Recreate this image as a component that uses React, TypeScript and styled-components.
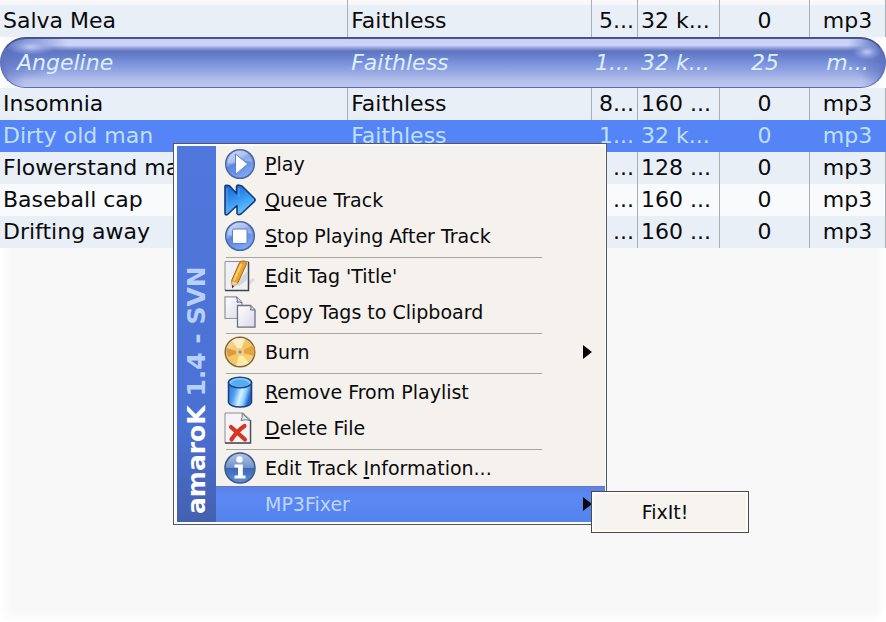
import React from "react";
import styled, { createGlobalStyle, css } from "styled-components";

const GlobalStyle = createGlobalStyle`
  * { box-sizing: border-box; }
  body { margin: 0; background: #f8f8f9; }
`;

const Window = styled.main`
  position: relative;
  min-height: 100vh;
  overflow: hidden;
  background: #f8f8f9;
  box-shadow: inset 0 0 8px 5px #ffffff;
  font-family: "DejaVu Sans", Verdana, sans-serif;
  color: #0a0a0c;
`;

/* ---------- playlist ---------- */

const Playlist = styled.table`
  width: 100%;
  table-layout: fixed;
  border-collapse: separate;
  border-spacing: 0;
  font-size: 22px;
  line-height: 32px;
`;

const Col = styled.col<{ $width?: string }>`
  width: ${(p) => p.$width ?? "auto"};
`;

type Align = "left" | "center" | "right";

const Cell = styled.td<{ $align?: Align }>`
  height: 32px;
  padding: 0 3px;
  overflow: hidden;
  white-space: nowrap;
  text-align: ${(p) => p.$align ?? "left"};
  border-right: 1px solid #a9adb4;
`;

type Tone = "tinted" | "plain" | "edge" | "playing" | "selected";

const glass = `linear-gradient(
  #c9d2f4 0, #ccd5f8 13%, #98a8de 18%, #5f74bc 25%, #667dcb 34%,
  #7d94de 52%, #98a9e4 70%, #b3bfea 86%, #bcc6ee 100%
)`;

const TrackRow = styled.tr<{ $tone: Tone }>`
  background: #e9eff7;

  ${(p) => p.$tone === "plain" && css`background: #f8fafc;`}

  ${(p) =>
    p.$tone === "edge" &&
    css`
      background: #f8f8fa;
      ${Cell} { height: 5px; padding: 0; line-height: 4px; }
    `}

  ${(p) =>
    p.$tone === "selected" &&
    css`
      background: #5484f6;
      color: #bfe0ff;
      ${Cell} { border-color: transparent; }
    `}

  ${(p) =>
    p.$tone === "playing" &&
    css`
      background: #eef2fa;
      color: #dcf0ff;
      font-style: italic;
      ${Cell} {
        height: 51px;
        border: 0 solid #5d6cae;
        border-top: 2px solid #46538f;
        border-bottom-width: 1px;
        background: ${glass};
      }
      ${Cell}:nth-child(3) {
        padding-right: 8px;
      }
      ${Cell}:first-child {
        padding-left: 16px;
        border-left-width: 1px;
        border-radius: 26px 0 0 26px;
        background:
          radial-gradient(ellipse 24px 8px at 30px 8px, #bccaf4 0, #a9b9ee80 50%, transparent 100%),
          radial-gradient(ellipse 64px 34px at 4px 10px, #5a6fbe 0, #6479c6b0 45%, transparent 100%),
          linear-gradient(90deg, #5f74c2 0, #7488ce80 8px, transparent 24px),
          ${glass};
      }
      ${Cell}:last-child {
        border-right-width: 1px;
        border-radius: 0 26px 26px 0;
        background:
          radial-gradient(ellipse 14px 8px at calc(100% - 18px) 13px, #bccaf4 0, #a9b9ee80 50%, transparent 100%),
          radial-gradient(ellipse 36px 34px at calc(100% - 2px) 12px, #5a6fbe 0, #6479c6b0 45%, transparent 100%),
          linear-gradient(270deg, #5f74c2 0, #7488ce80 8px, transparent 24px),
          ${glass};
      }
    `}
`;

interface Track {
  tone: Tone;
  cells: string[];
}

const tracks: Track[] = [
  { tone: "edge", cells: ["", "", "", "", "", ""] },
  { tone: "tinted", cells: ["Salva Mea", "Faithless", "5...", "32 k...", "0", "mp3"] },
  { tone: "playing", cells: ["Angeline", "Faithless", "1...", "32 k...", "25", "m..."] },
  { tone: "tinted", cells: ["Insomnia", "Faithless", "8...", "160 ...", "0", "mp3"] },
  { tone: "selected", cells: ["Dirty old man", "Faithless", "1...", "32 k...", "0", "mp3"] },
  { tone: "tinted", cells: ["Flowerstand man", "", "...", "128 ...", "0", "mp3"] },
  { tone: "plain", cells: ["Baseball cap", "", "...", "160 ...", "0", "mp3"] },
  { tone: "tinted", cells: ["Drifting away", "", "...", "160 ...", "0", "mp3"] },
];

const alignments: Align[] = ["left", "left", "right", "left", "center", "center"];

/* ---------- context menu ---------- */

const ContextMenu = styled.div`
  position: absolute;
  left: 173px;
  top: 143px;
  width: 434px;
  display: flex;
  padding: 2px 1px 2px 3px;
  border: 1px solid #55585f;
  background: #fdfcfb;
  font-size: 19px;
`;

const Banner = styled.div`
  flex: none;
  width: 39px;
  display: flex;
  align-items: center;
  padding-top: 8px;
  writing-mode: vertical-rl;
  transform: rotate(180deg);
  background: linear-gradient(#4460b0, #4a70d2 25%, #5078dc);
  color: #b7d0ff;
  font-size: 25px;
  line-height: 39px;
  font-weight: bold;
  white-space: nowrap;
`;

const BannerName = styled.span`
  color: #ffffff;
`;

const MenuList = styled.ul`
  flex: 1;
  min-width: 0;
  margin: 0;
  padding: 0;
  list-style: none;
  background: #f5f1ec;
`;

const MenuEntry = styled.li`
  position: relative;
`;

const MenuButton = styled.button<{ $active?: boolean }>`
  width: 100%;
  height: 36px;
  display: flex;
  align-items: center;
  gap: 9px;
  padding: 0 13px 0 8px;
  border: 0;
  background: transparent;
  color: inherit;
  font: inherit;
  text-align: left;
  white-space: nowrap;

  ${(p) =>
    p.$active &&
    css`
      background: linear-gradient(#6378b4 1px, #5a82e6 1px, #5b88f4 30%, #5583ec);
      color: #bfd6fb;
    `}
`;

const IconSlot = styled.span`
  flex: none;
  width: 32px;
  height: 32px;

  svg { display: block; }
`;

const Label = styled.span`
  flex: 1;
`;

const Mnemonic = styled.span`
  text-decoration: underline;
  text-decoration-thickness: 2px;
  text-underline-offset: 2px;
`;

const Divider = styled.li`
  height: 4px;
  margin: 0 63px 0 10px;
  background: linear-gradient(#a8a59f, #a8a59f) 0 3px / 100% 1px no-repeat;
`;

const Submenu = styled.div`
  position: absolute;
  left: calc(100% - 14px);
  top: 5px;
  width: 158px;
  padding: 2px;
  border: 1px solid #4b4b4e;
  background: #fdfcfb;
`;

const SubmenuButton = styled.button`
  width: 100%;
  height: 36px;
  padding: 0 10px 0 0;
  border: 0;
  background: #f7f3ee;
  color: inherit;
  font: inherit;
  text-align: center;
`;

/* ---------- icons ---------- */

const Svg = ({ children }: { children: React.ReactNode }) => (
  <svg width="32" height="32" viewBox="0 0 32 32" aria-hidden="true">
    {children}
  </svg>
);

const Orb = ({ id, children }: { id: string; children: React.ReactNode }) => (
  <Svg>
    <defs>
      <linearGradient id={id} x1="0" y1="0" x2="0.6" y2="1">
        <stop offset="0" stopColor="#c3d2f4" />
        <stop offset="0.42" stopColor="#88a7e8" />
        <stop offset="0.5" stopColor="#5a86dc" />
        <stop offset="1" stopColor="#7fa9f4" />
      </linearGradient>
    </defs>
    <circle cx="16" cy="16" r="14.3" fill={`url(#${id})`} stroke="#4c66a8" strokeWidth="1.5" />
    <path d="M4 15a12 12 0 0 1 24-1c-7-3-15 3-24 1z" fill="#fff" opacity=".3" />
    {children}
  </Svg>
);

const PlayIcon = () => (
  <Orb id="orb-play">
    <path d="M11.500 6v20.500L23.800 16z" fill="#fff" stroke="#5b80cf" strokeWidth="1" />
  </Orb>
);

const StopIcon = () => (
  <Orb id="orb-stop">
    <rect x="8.500" y="9" width="14.500" height="14.500" rx="1.500" fill="#fff" stroke="#5b80cf" strokeWidth="1" />
  </Orb>
);

const QueueIcon = () => (
  <Svg>
    <defs>
      <linearGradient id="queue" x1="0" y1="0" x2="0.4" y2="1">
        <stop offset="0" stopColor="#1c62c6" />
        <stop offset="0.45" stopColor="#2f8cec" />
        <stop offset="1" stopColor="#62c4ff" />
      </linearGradient>
    </defs>
    <path
      d="M1 2.500Q1 .8 3 1.400L5.500 1.800L12.500 9.500V2.500Q13 .8 15 1.200L18 2L30.500 14.500Q31.800 16 30.500 17.300L17 30Q14 31.500 13 29.500V21.500L3.500 30.500Q1.200 31.600 1 29.500Z"
      fill="url(#queue)"
      stroke="#173a7c"
      strokeWidth="1.600"
      strokeLinejoin="round"
    />
    <path d="M3 4v23M15 4v9" stroke="#5aa6f4" strokeWidth="1" fill="none" />
  </Svg>
);

const EditIcon = () => (
  <Svg>
    <path d="M19 24l10-6 2 2-8 7z" fill="#dedbdd" />
    <path d="M1 1.500h23.500v29H1z" fill="#eef0f5" stroke="#8d92a0" strokeWidth="1" />
    <path d="M24.500 2v28.500H1" fill="none" stroke="#3f4552" strokeWidth="1.500" />
    <path d="M11 25l12-14v9l-8 6z" fill="#d5d6de" />
    <path d="M15.500 2.500Q17 .6 20 1q3 .6 2.300 3.500L14 22.500l-5.500 5-.8-7z" fill="#f2a02c" stroke="#a8641c" strokeWidth="1" />
    <path d="M17.500 4L10 20.500" stroke="#ffd272" strokeWidth="2" />
    <path d="M8 21.500l5.500 1.500L8.500 27.500z" fill="#efd3a4" />
    <path d="M8 25l2 1L8.300 28.500z" fill="#2c2620" />
  </Svg>
);

const CopyIcon = () => (
  <Svg>
    <defs>
      <linearGradient id="sheet" x1="0" y1="0" x2="1" y2="1">
        <stop offset="0" stopColor="#ffffff" />
        <stop offset="1" stopColor="#d8d8ea" />
      </linearGradient>
    </defs>
    <path d="M1 .8h11.500l5.500 5.500V22.500H1z" fill="url(#sheet)" stroke="#8f92a2" strokeWidth="1.200" />
    <path d="M12.500 .8q1.500 3 .5 5.500 3-.8 5 .5" fill="#d8dae8" stroke="#60657a" />
    <path d="M13.500 9.500H26.500l4.500 4.500v17.200H13.500z" fill="url(#sheet)" stroke="#6c7084" strokeWidth="1.300" />
    <path d="M26.500 9.500q1 2.500 0 4.500h4.500" fill="#d2d4e4" stroke="#6c7084" />
  </Svg>
);

const BurnIcon = () => (
  <Svg>
    <defs>
      <linearGradient id="disc" x1="0" y1="0" x2="1" y2="1">
        <stop offset="0" stopColor="#f3dca6" />
        <stop offset="0.5" stopColor="#f2c464" />
        <stop offset="1" stopColor="#f8dc80" />
      </linearGradient>
    </defs>
    <circle cx="16" cy="16" r="14.800" fill="url(#disc)" stroke="#80643c" strokeWidth="1.400" />
    <path d="M16 16L2.500 12a14 14 0 0 0 2 9z" fill="#dd9a3c" />
    <path d="M16 16l13-7q2.500 5 1 11z" fill="#e4a440" />
    <path d="M16 16L8 4.500q6-4 13-1.500z" fill="#fbeec6" />
    <path d="M16 16l9 11q-6 4-13 2.500z" fill="#fdeaa4" />
    <circle cx="16" cy="16" r="4" fill="#efcf8c" />
    <circle cx="16" cy="16" r="1.700" fill="#9a8f78" />
  </Svg>
);

const RemoveIcon = () => (
  <Svg>
    <defs>
      <linearGradient id="bin" x1="0" y1="0" x2="1" y2="0.3">
        <stop offset="0" stopColor="#2470d8" />
        <stop offset="0.35" stopColor="#4ca0f0" />
        <stop offset="0.62" stopColor="#d4f2ff" />
        <stop offset="0.8" stopColor="#8ccfff" />
        <stop offset="1" stopColor="#2464c4" />
      </linearGradient>
    </defs>
    <path d="M4.500 6.500v20q2 4.500 11.500 4.500t11.500-4.500v-20z" fill="url(#bin)" stroke="#1b3c84" strokeWidth="1.500" />
    <ellipse cx="16" cy="6.500" rx="11.500" ry="5.300" fill="#8accfa" stroke="#1b448e" strokeWidth="1.500" />
    <ellipse cx="16" cy="7.200" rx="9" ry="3.600" fill="#5aaaf0" />
  </Svg>
);

const DeleteIcon = () => (
  <Svg>
    <path d="M1 1h18l7.500 7v23H1z" fill="#f6f4f7" stroke="#8b8e9a" strokeWidth="1" />
    <path d="M26.500 8v23H1" fill="none" stroke="#4c4f5c" strokeWidth="1.500" />
    <path d="M18 1.500q1 4-1 7 5-1.500 9 0z" fill="#e3e5ef" stroke="#70758a" />
    <path d="M7 15l14 12.500M20.500 14Q13 19 7.500 27.500" fill="none" stroke="#d83420" strokeWidth="4.200" strokeLinecap="round" />
  </Svg>
);

const InfoIcon = () => (
  <Svg>
    <defs>
      <linearGradient id="info" x1="0" y1="0" x2="0" y2="1">
        <stop offset="0" stopColor="#b4c6e6" />
        <stop offset="0.48" stopColor="#7294cc" />
        <stop offset="0.52" stopColor="#3b68b4" />
        <stop offset="1" stopColor="#5a90de" />
      </linearGradient>
    </defs>
    <circle cx="16" cy="16" r="15" fill="url(#info)" stroke="#3d5688" strokeWidth="1.500" />
    <circle cx="15.500" cy="7.500" r="3.200" fill="#fff" />
    <path d="M10.500 12.500h8.300V23.500H21.500V26.500H10.500v-3h3.500V15.500H10.500z" fill="#fff" />
  </Svg>
);

const SubmenuArrow = () => (
  <svg width="9" height="14" viewBox="0 0 9 14" aria-hidden="true">
    <path d="M0 0l9 7-9 7z" fill="#08080a" />
  </svg>
);

/* ---------- page ---------- */

interface ItemProps {
  icon?: React.ReactNode;
  active?: boolean;
  submenu?: boolean;
  children: React.ReactNode;
  flyout?: React.ReactNode;
}

const Item = ({ icon, active, submenu, children, flyout }: ItemProps) => (
  <MenuEntry role="none">
    <MenuButton type="button" role="menuitem" $active={active} aria-haspopup={submenu ? "menu" : undefined}>
      <IconSlot>{icon}</IconSlot>
      <Label>{children}</Label>
      {submenu && <SubmenuArrow />}
    </MenuButton>
    {flyout}
  </MenuEntry>
);

export default function App() {
  return (
    <Window>
      <GlobalStyle />
      <Playlist aria-label="Playlist">
        <colgroup>
          <Col $width="39.3%" />
          <Col />
          <Col $width="46px" />
          <Col $width="82px" />
          <Col $width="90px" />
          <Col $width="76px" />
        </colgroup>
        <tbody>
          {tracks.map((track, row) => (
            <TrackRow key={row} $tone={track.tone}>
              {track.cells.map((text, i) => (
                <Cell key={i} $align={alignments[i]}>
                  {text}
                </Cell>
              ))}
            </TrackRow>
          ))}
        </tbody>
      </Playlist>

      <ContextMenu>
        <Banner>
          <span>
            <BannerName>amaroK</BannerName> 1.4 - SVN
          </span>
        </Banner>
        <MenuList role="menu" aria-label="Track actions">
          <Item icon={<PlayIcon />}><Mnemonic>P</Mnemonic>lay</Item>
          <Item icon={<QueueIcon />}><Mnemonic>Q</Mnemonic>ueue Track</Item>
          <Item icon={<StopIcon />}><Mnemonic>S</Mnemonic>top Playing After Track</Item>
          <Divider role="separator" />
          <Item icon={<EditIcon />}><Mnemonic>E</Mnemonic>dit Tag 'Title'</Item>
          <Item icon={<CopyIcon />}><Mnemonic>C</Mnemonic>opy Tags to Clipboard</Item>
          <Divider role="separator" />
          <Item icon={<BurnIcon />} submenu>Burn</Item>
          <Divider role="separator" />
          <Item icon={<RemoveIcon />}><Mnemonic>R</Mnemonic>emove From Playlist</Item>
          <Item icon={<DeleteIcon />}><Mnemonic>D</Mnemonic>elete File</Item>
          <Divider role="separator" />
          <Item icon={<InfoIcon />}>Edit Track <Mnemonic>I</Mnemonic>nformation...</Item>
          <Item
            active
            submenu
            flyout={
              <Submenu role="menu" aria-label="MP3Fixer">
                <SubmenuButton type="button" role="menuitem">FixIt!</SubmenuButton>
              </Submenu>
            }
          >
            MP3Fixer
          </Item>
        </MenuList>
      </ContextMenu>
    </Window>
  );
}
